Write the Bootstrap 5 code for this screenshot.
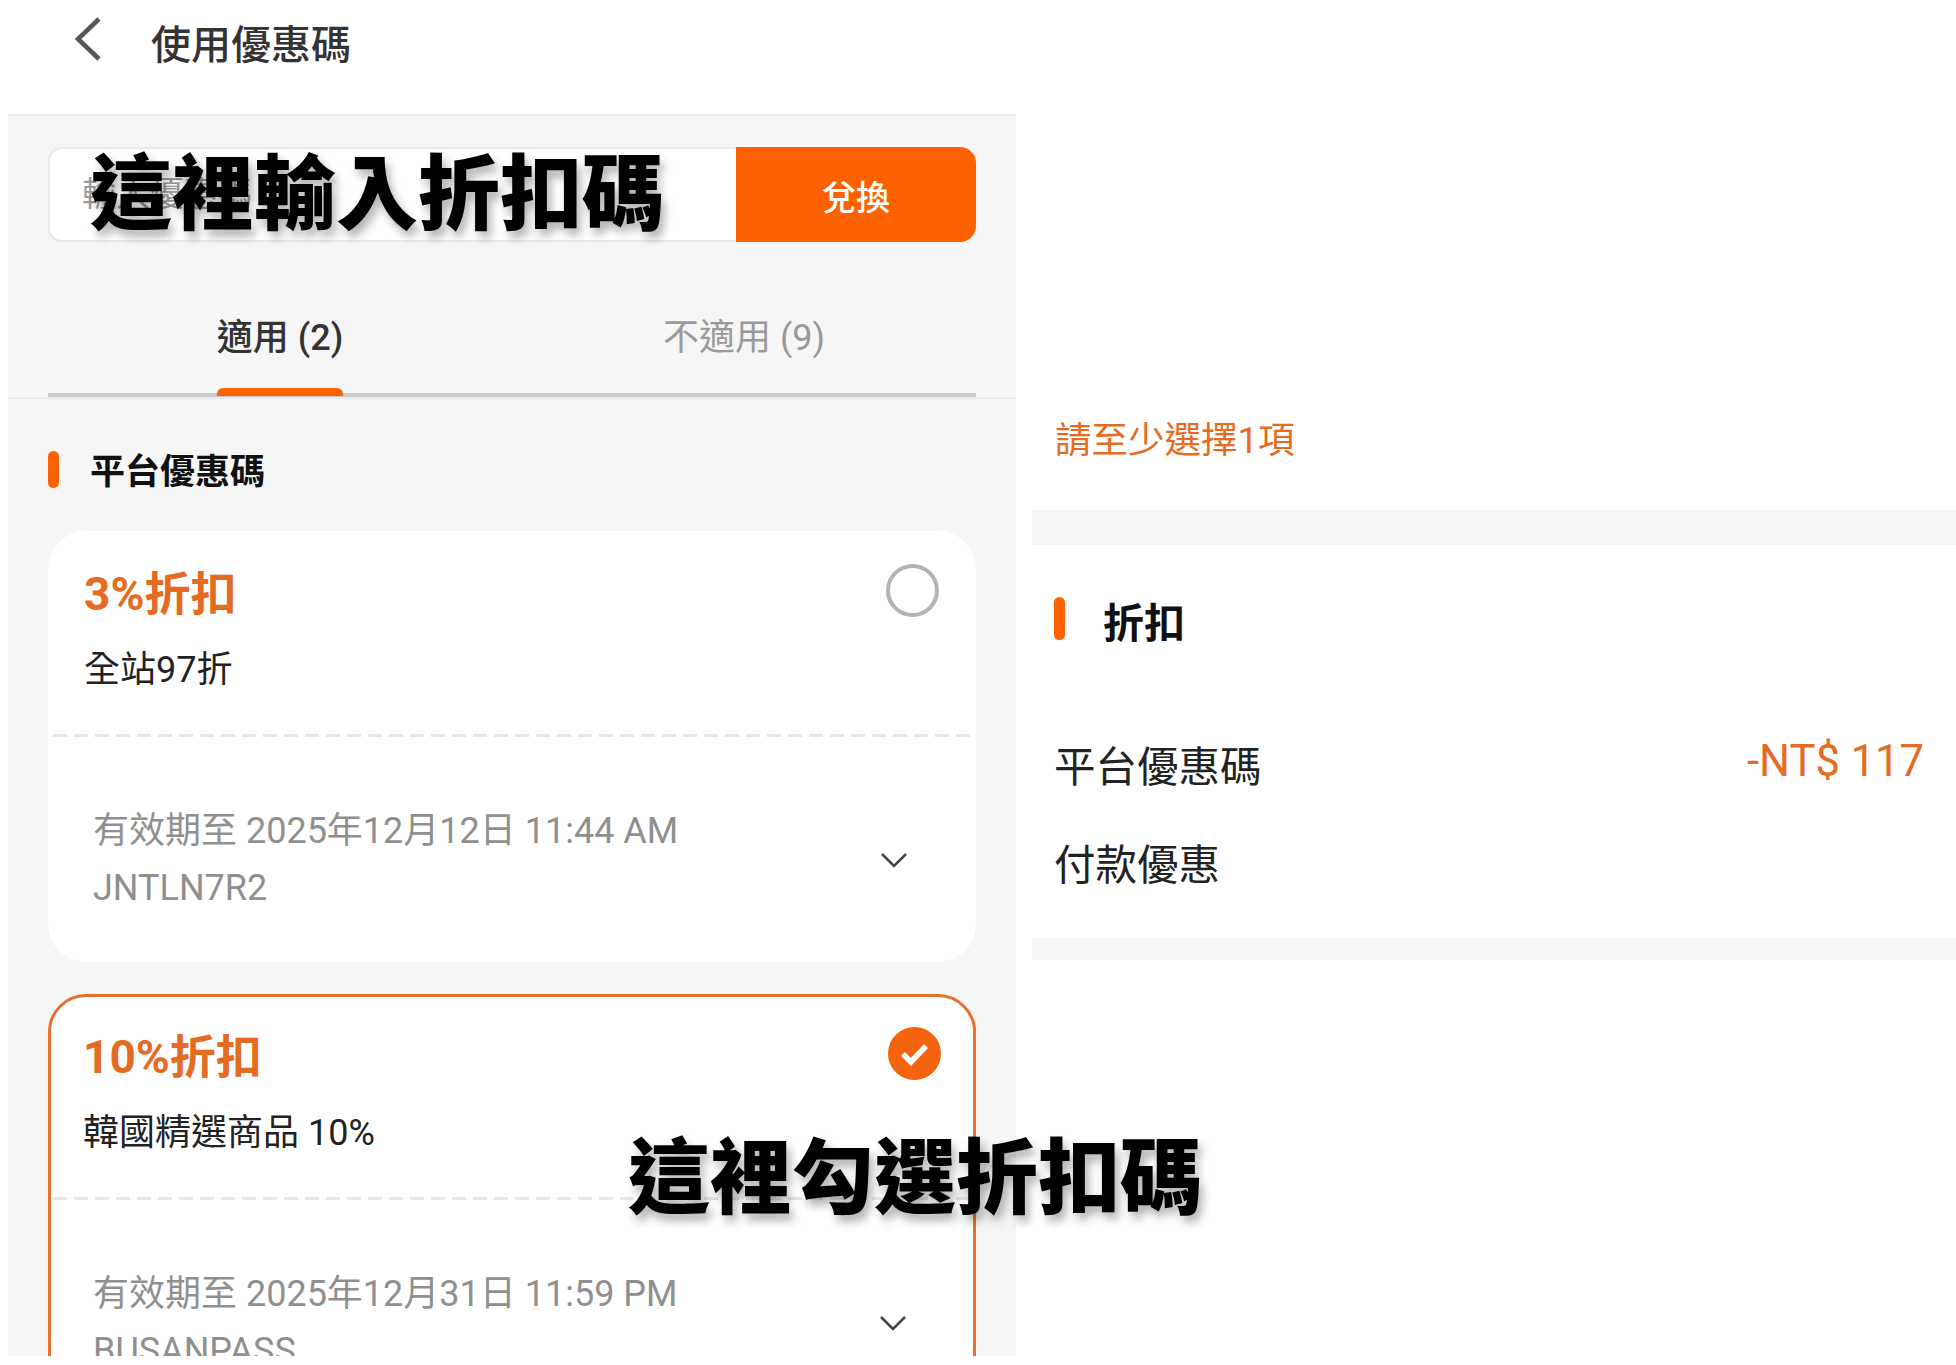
<!DOCTYPE html>
<html lang="zh-Hant">
<head>
    <meta charset="UTF-8">
    <title>使用優惠碼</title>
    <link href="https://cdn.jsdelivr.net/npm/bootstrap@5.3.0/dist/css/bootstrap.min.css" rel="stylesheet">
    <style>
        :root {
            --orange: #ff6000;
            --orange-text: #e56a22;
        }
        body {
            background: #fff;
            font-family: "Roboto", "Noto Sans CJK TC", sans-serif;
            color: #222;
            overflow: hidden;
        }
        .stage {
            width: 1956px;
            height: 1356px;
            overflow: hidden;
            position: relative;
        }
        .left-panel {
            width: 1008px;
            margin-left: 8px;
            flex: none;
        }
        .right-panel {
            margin-left: 16px;
            flex: 1;
            padding-top: 409px;
        }
        .top-head {
            height: 114px;
            padding-left: 66px;
            padding-bottom: 22px;
            gap: 50px;
            font-size: 40px;
            font-weight: 500;
            color: #333;
        }
        .back-arrow {
            margin-bottom: 14px;
        }
        .coupon-body {
            background: #f6f6f6;
            border-top: 2px solid #e9e9e9;
            padding: 31px 40px 0;
            height: 1242px;
        }
        .code-box {
            height: 95px;
        }
        .code-input {
            flex: 1;
            background: #fff;
            border: 2px solid #e8e8e8;
            border-right: 0;
            border-radius: 14px 0 0 14px;
            padding-left: 32px;
            font-size: 34px;
            color: #999;
        }
        .code-btn {
            width: 240px;
            background: var(--orange);
            color: #fff;
            border-radius: 0 16px 16px 0;
            font-size: 34px;
            font-weight: 500;
            padding-top: 8px;
        }
        .tab-row {
            margin: 49px -40px 0;
            padding: 0 40px;
            height: 108px;
            border-bottom: 2px solid #ebebeb;
        }
        .tab-inner {
            height: 106px;
            border-bottom: 4px solid #c9c9cf;
        }
        .tab-item {
            flex: 1;
            font-size: 36px;
            color: #9a9a9a;
            padding-top: 22px;
        }
        .tab-item b {
            font-weight: 500;
            color: #333;
            position: relative;
            display: block;
            line-height: 50px;
        }
        .tab-item span {
            display: block;
            line-height: 50px;
        }
        .tab-mark {
            position: absolute;
            left: 0;
            right: 0;
            top: 75px;
            height: 8px;
            background: var(--orange);
            border-radius: 6px 6px 0 0;
        }
        .sec-bar {
            width: 11px;
            height: 37px;
            background: var(--orange);
            border-radius: 6px;
            flex: none;
        }
        .sec-title {
            gap: 31px;
            font-weight: 700;
            color: #111;
        }
        .sec-left {
            margin-top: 50px;
            height: 40px;
            font-size: 35px;
        }
        .sec-left span {
            margin-top: 9px;
        }
        .coupon {
            background: #fff;
            border-radius: 38px;
            margin-top: 42px;
            height: 431px;
        }
        .coupon.picked {
            border: 3px solid #e8702a;
            margin-top: 32px;
            height: 480px;
        }
        .coupon-top {
            height: 206px;
            padding: 33px 32px 0 31px;
            margin: 0 5px;
            background: repeating-linear-gradient(90deg, #e6e6e6 0 14px, transparent 14px 21px) left bottom / 100% 3px no-repeat;
        }
        .picked .coupon-top {
            height: 203px;
            margin: 0 2px;
            padding: 30px 30px 0 30px;
        }
        .coupon-name {
            font-size: 46px;
            font-weight: 700;
            color: var(--orange-text);
            line-height: 60px;
        }
        .coupon-desc {
            font-size: 36px;
            line-height: 50px;
            margin-top: 21px;
            color: #222;
        }
        .pick-dot {
            width: 53px;
            height: 53px;
            flex: none;
        }
        .coupon-foot {
            padding: 66px 68px 0 45px;
            font-size: 36px;
            line-height: 57px;
            color: #8f8f8f;
        }
        .picked .coupon-foot {
            padding-left: 42px;
            padding-right: 66px;
        }
        .foot-arrow {
            width: 28px;
            height: 18px;
            flex: none;
        }
        .right-note {
            font-size: 36.5px;
            line-height: 50px;
            color: var(--orange-text);
            padding-left: 23px;
            height: 101px;
            padding-top: 7px;
        }
        .grey-band {
            background: #f6f6f6;
            height: 35px;
        }
        .grey-band.thin {
            height: 22px;
        }
        .disc-box {
            padding: 52px 32px 0 22px;
            height: 393px;
        }
        .sec-right {
            font-size: 41px;
            height: 43px;
            gap: 38px;
        }
        .sec-right .sec-bar {
            height: 43px;
        }
        .sec-right span {
            margin-top: 12px;
        }
        .disc-row {
            font-size: 41.5px;
            line-height: 60px;
            color: #222;
            height: 98px;
        }
        .disc-first {
            margin-top: 98px;
        }
        .disc-row em {
            font-style: normal;
            font-size: 43.5px;
            color: var(--orange-text);
            margin-top: -6px;
        }
        .over-text {
            position: absolute;
            font-size: 82px;
            line-height: 100px;
            font-weight: 900;
            color: #000;
            white-space: nowrap;
            text-shadow: 4px 7px 10px rgba(0, 0, 0, .3);
        }
        .over-a { left: 90px; top: 145px; }
        .over-b { left: 628px; top: 1129px; }
    </style>
</head>
<body>
    <div class="stage d-flex align-items-start">
        <div class="left-panel">
            <div class="top-head d-flex align-items-center">
                <svg class="back-arrow" width="27" height="44" viewBox="0 0 27 44"><path d="M25 2 4 22l21 20" fill="none" stroke="#555" stroke-width="4.5"/></svg>
                <span>使用優惠碼</span>
            </div>
            <div class="coupon-body">
                <div class="code-box d-flex">
                    <div class="code-input d-flex align-items-center">輸入優惠碼</div>
                    <div class="code-btn d-flex align-items-center justify-content-center">兌換</div>
                </div>
                <div class="tab-row">
                    <div class="tab-inner d-flex">
                        <div class="tab-item d-flex justify-content-center"><b>適用 (2)<i class="tab-mark"></i></b></div>
                        <div class="tab-item d-flex justify-content-center"><span>不適用 (9)</span></div>
                    </div>
                </div>
                <div class="sec-title sec-left d-flex align-items-center">
                    <i class="sec-bar"></i>
                    <span>平台優惠碼</span>
                </div>

                <div class="coupon">
                    <div class="coupon-top d-flex justify-content-between">
                        <div>
                            <div class="coupon-name">3%折扣</div>
                            <div class="coupon-desc">全站97折</div>
                        </div>
                        <svg class="pick-dot" viewBox="0 0 53 53"><circle cx="26.5" cy="26.5" r="24.5" fill="#fff" stroke="#b3b3b3" stroke-width="4"/></svg>
                    </div>
                    <div class="coupon-foot d-flex justify-content-between align-items-center">
                        <div>有效期至 2025年12月12日 11:44 AM<br>JNTLN7R2</div>
                        <svg class="foot-arrow" viewBox="0 0 28 18"><path d="M2 3l12 12L26 3" fill="none" stroke="#444" stroke-width="2.5"/></svg>
                    </div>
                </div>

                <div class="coupon picked">
                    <div class="coupon-top d-flex justify-content-between">
                        <div>
                            <div class="coupon-name">10%折扣</div>
                            <div class="coupon-desc">韓國精選商品 10%</div>
                        </div>
                        <svg class="pick-dot" viewBox="0 0 53 53"><circle cx="26.5" cy="26.5" r="26.5" fill="#f4640f"/><path d="M15 27l8 8 15-16" fill="none" stroke="#fff" stroke-width="5.5"/></svg>
                    </div>
                    <div class="coupon-foot d-flex justify-content-between align-items-center">
                        <div>有效期至 2025年12月31日 11:59 PM<br>BUSANPASS</div>
                        <svg class="foot-arrow" viewBox="0 0 28 18"><path d="M2 3l12 12L26 3" fill="none" stroke="#444" stroke-width="2.5"/></svg>
                    </div>
                </div>
            </div>
        </div>

        <div class="right-panel">
            <div class="right-note">請至少選擇1項</div>
            <div class="grey-band"></div>
            <div class="disc-box">
                <div class="sec-title sec-right d-flex align-items-center">
                    <i class="sec-bar"></i>
                    <span>折扣</span>
                </div>
                <div class="disc-row disc-first d-flex justify-content-between">
                    <span>平台優惠碼</span>
                    <em>-NT$ 117</em>
                </div>
                <div class="disc-row">付款優惠</div>
            </div>
            <div class="grey-band thin"></div>
        </div>

        <div class="over-text over-a">這裡輸入折扣碼</div>
        <div class="over-text over-b">這裡勾選折扣碼</div>
    </div>
    <script src="https://cdn.jsdelivr.net/npm/bootstrap@5.3.0/dist/js/bootstrap.bundle.min.js"></script>
</body>
</html>
